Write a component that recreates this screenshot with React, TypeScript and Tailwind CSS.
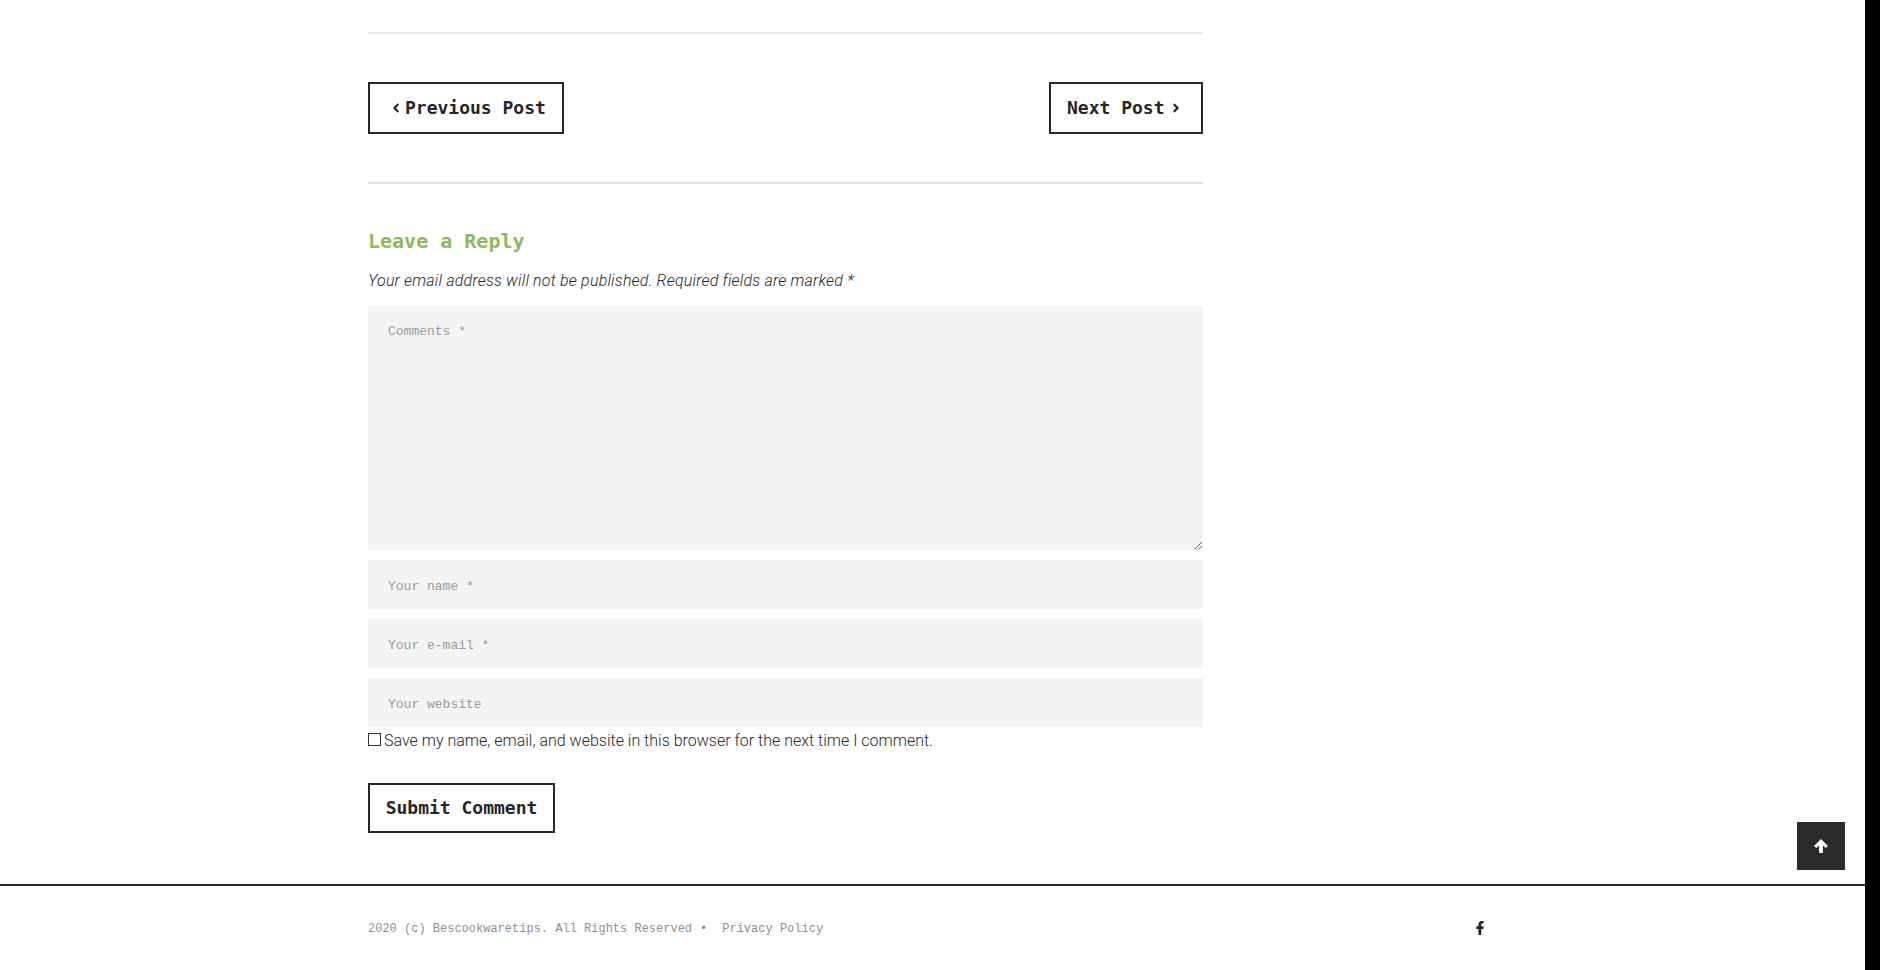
import { FaAngleLeft, FaAngleRight, FaFacebookF } from 'react-icons/fa';

const mono = "font-['DejaVu_Sans_Mono',monospace]";
const thinMono = "font-['Liberation_Mono',monospace]";

export default function App() {
  return (
    <div className="flex h-screen overflow-hidden bg-white font-['Roboto',sans-serif] text-[#262626]">
      <div className="relative flex-1 min-w-0">
        <div className="w-[835px] ml-[368px] pt-[32px]">
          <div className="h-[2px] bg-[#e8e8e8]" />

          {/* Post navigation */}
          <div className="flex justify-between mt-[48px]">
            <a className={`flex items-center w-[196px] h-[52px] pl-[19px] pb-[2px] border-2 border-[#262626] text-[18px] font-bold ${mono}`}>
              <FaAngleLeft className="w-[14px] h-[14px] mr-[2px] mt-[2px]" />
              Previous Post
            </a>
            <a className={`flex items-center w-[154px] h-[52px] pl-[16px] pb-[2px] border-2 border-[#262626] text-[18px] font-bold ${mono}`}>
              Next Post
              <FaAngleRight className="w-[14px] h-[14px] ml-[4px] mt-[2px]" />
            </a>
          </div>

          <div className="h-[2px] bg-[#e2e2e2] mt-[48px]" />

          {/* Comment form */}
          <h3 className={`mt-[44px] text-[20px] leading-[26px] font-bold text-[#8bbb5c] ${mono}`}>Leave a Reply</h3>
          <p className="mt-[15px] text-[16px] leading-[24px] font-light italic tracking-[0.2px]">
            Your email address will not be published. Required fields are marked *
          </p>
          <textarea
            placeholder="Comments *"
            className={`block w-full h-[244px] mt-[13px] px-[20px] py-[18px] bg-[#f4f4f4] text-[13px] leading-[16px] outline-none placeholder:text-[#9a9a9a] ${thinMono}`}
          />
          <div className="flex flex-col gap-[10px] mt-[10px]">
            {['Your name *', 'Your e-mail *', 'Your website'].map((text) => (
              <input
                key={text}
                placeholder={text}
                className={`block w-full h-[49px] px-[20px] pt-[4px] bg-[#f4f4f4] text-[13px] outline-none placeholder:text-[#9a9a9a] ${thinMono}`}
              />
            ))}
          </div>
          <label className="flex items-center h-[26px] pt-[2px] text-[16px] font-light">
            <input type="checkbox" className="appearance-none w-[13px] h-[13px] mr-[3px] mb-[4px] border border-[#333] bg-white" />
            Save my name, email, and website in this browser for the next time I comment.
          </label>
          <button className={`block w-[187px] h-[50px] mt-[30px] pb-[2px] border-2 border-[#262626] text-[18px] font-bold ${mono}`}>
            Submit Comment
          </button>
        </div>

        {/* Footer */}
        <footer className="mt-[51px] border-t-2 border-[#262626]">
          <div className="flex items-center justify-between w-[1119px] ml-[368px] pt-[35px]">
            <p className={`text-[12px] leading-[16px] text-[#909090] ${thinMono}`}>
              2020 (c) Bescookwaretips. All Rights Reserved
              <span className="ml-[8px] mr-[15px]">•</span>
              Privacy Policy
            </p>
            <FaFacebookF className="w-[14px] h-[14px] mb-[2px]" />
          </div>
        </footer>

        <a className="absolute left-[1797px] top-[822px] flex items-center justify-center w-[48px] h-[48px] bg-[#2a2a2a] text-white">
          <svg viewBox="0 0 14 14" className="w-[14px] h-[14px]" fill="currentColor">
            <path d="M7 0 L14 7 L11.6 8.9 L8.9 6.2 V14 H5.1 V6.2 L2.4 8.9 L0 7 Z" />
          </svg>
        </a>
      </div>
      <div className="w-[15px] shrink-0 bg-black" />
    </div>
  );
}
